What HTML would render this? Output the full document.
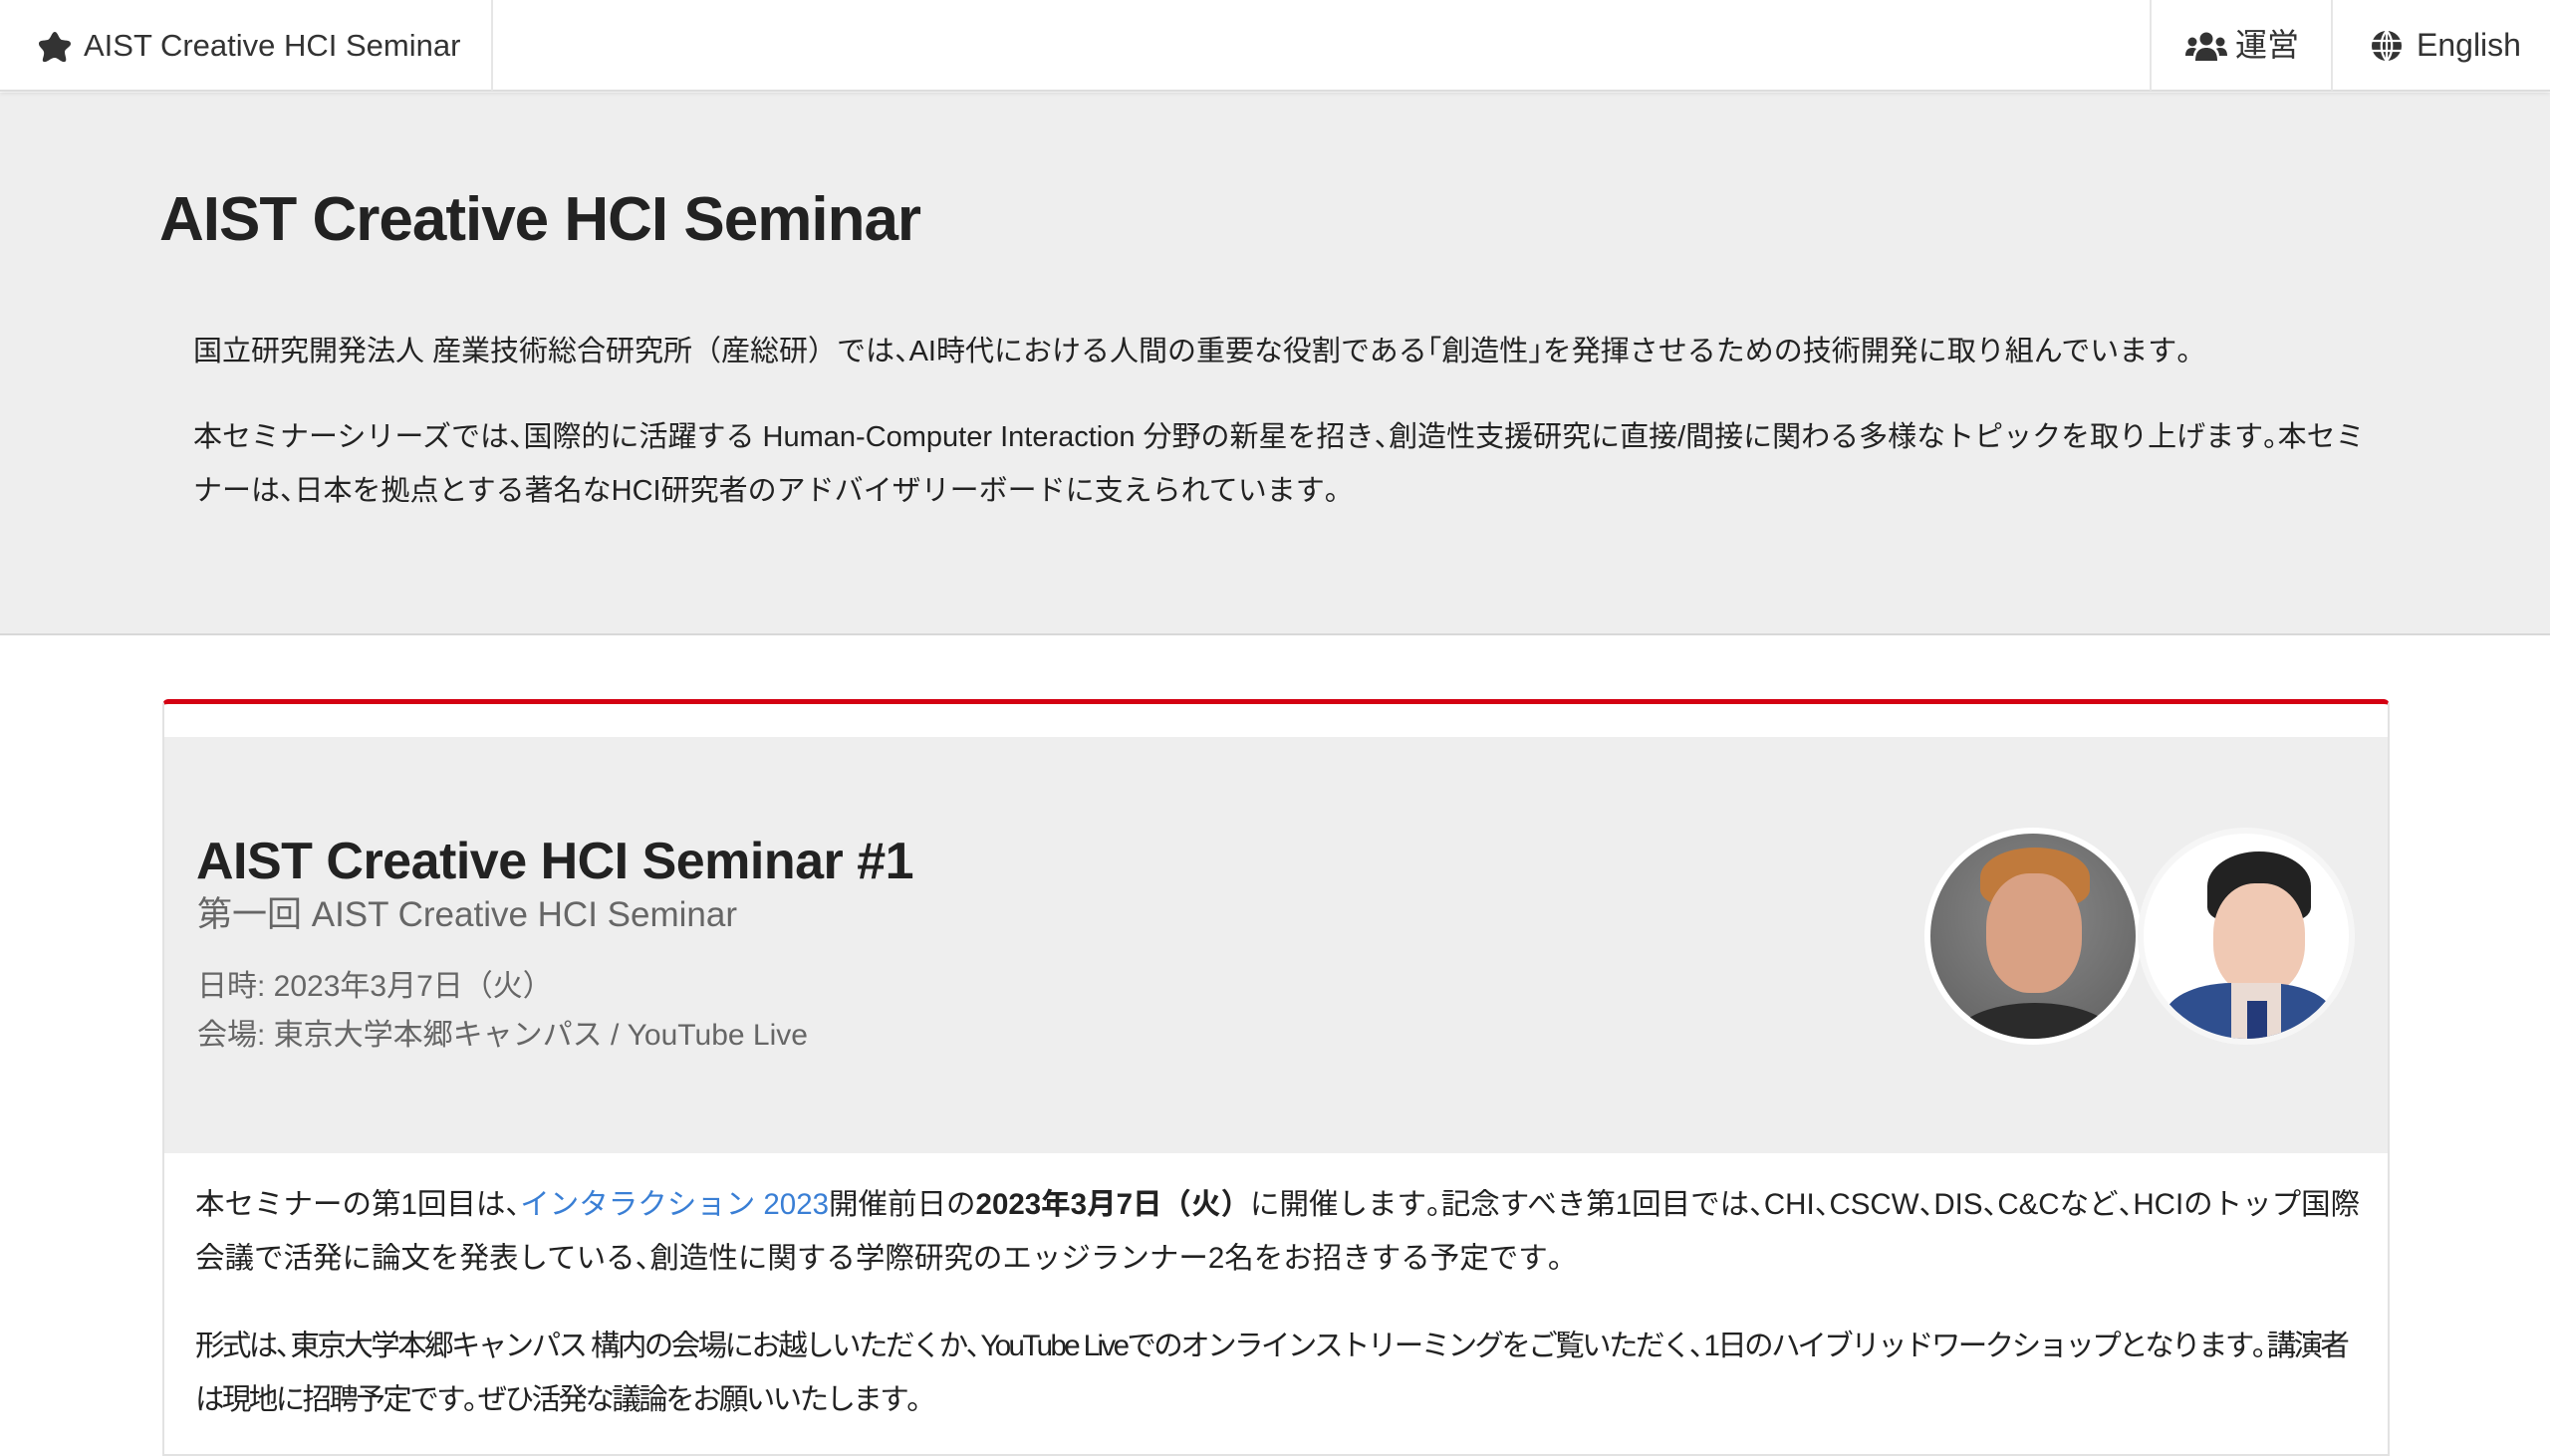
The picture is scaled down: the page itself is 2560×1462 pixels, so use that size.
<!DOCTYPE html>
<html><head><meta charset="utf-8">
<style>
*{margin:0;padding:0;box-sizing:border-box}
html,body{width:2560px;height:1440px;overflow:hidden;background:#fff;font-family:"Liberation Sans","Noto Sans CJK JP",sans-serif;color:#222}
.p{letter-spacing:-0.5em}
.q{margin-left:-0.5em}
.nav{position:absolute;left:0;top:0;width:2560px;height:92px;background:#fff;border-bottom:2px solid #ddd;box-shadow:0 2px 4px rgba(0,0,0,.08);z-index:2}
.brand{position:absolute;left:0;top:0;width:495px;height:91px;border-right:2px solid #e6e6e6;font-size:31px;line-height:91px;padding-left:84px;color:#333}
.brand svg{position:absolute;left:38px;top:31px}
.ni{position:absolute;top:0;height:91px;line-height:91px;font-size:32px;color:#333;border-left:2px solid #e6e6e6}
.hero{position:absolute;left:0;top:93px;width:2560px;height:545px;background:#eee;border-bottom:2px solid #d8d8d8}
h1{position:absolute;left:160px;top:92px;font-size:62px;font-weight:bold;color:#222;letter-spacing:-1px}
.hp{position:absolute;left:194px;width:2185px;font-size:29px;line-height:54px;color:#222}
.card{position:absolute;left:163px;top:702px;width:2236px;height:760px;border:2px solid #e2e2e2;border-top:5px solid #d40012;border-radius:6px 6px 0 0;background:#fff}
.ch{position:absolute;left:0;top:33px;width:2232px;height:418px;background:#eee}
.ct{position:absolute;left:32px;top:95px;font-size:52px;font-weight:bold;color:#222;letter-spacing:-0.5px}
.cs{position:absolute;left:33px;top:150px;font-size:35px;color:#666}
.cd{position:absolute;left:33px;top:226px;font-size:30px;line-height:49px;color:#666}
.av{position:absolute;top:831px;width:218px;height:218px;border-radius:50%;border:6px solid #fff;overflow:hidden}
.bp{position:absolute;left:196px;width:2175px;font-size:29.5px;line-height:54px;color:#222}
a{color:#3a7fd5;text-decoration:none}
</style></head><body>
<div class="nav">
 <div class="brand"><svg width="34" height="32" viewBox="0 0 34 32"><path d="M17 1 C20 1 21 8 24 9 C28 10 33 9 33 13 C33 16 27 18 27 21 C27 25 30 30 27 31 C24 32 20 27 17 27 C13 27 9 32 6 31 C3 30 7 25 6 21 C5 18 1 16 1 13 C1 9 6 10 10 9 C13 8 14 1 17 1Z" fill="#333"/></svg>AIST Creative HCI Seminar</div>
 <div class="ni" style="left:2158px;width:182px;padding-left:34px"><svg style="position:absolute;left:34px;top:32px" width="42" height="30" viewBox="0 0 42 30"><circle cx="21" cy="7" r="6.5" fill="#333"/><circle cx="7" cy="10" r="4.5" fill="#333"/><circle cx="35" cy="10" r="4.5" fill="#333"/><path d="M10 29 C10 20 14 16 21 16 C28 16 32 20 32 29Z" fill="#333"/><path d="M0 24 C0 18 3 16 7 16 C10 16 11 17 11 17 C9 19 8 22 8 24Z M42 24 C42 18 39 16 35 16 C32 16 31 17 31 17 C33 19 34 22 34 24Z" fill="#333"/></svg><span style="position:absolute;left:84px">運営</span></div>
 <div class="ni" style="left:2340px;width:220px"><svg style="position:absolute;left:38px;top:30px" width="32" height="32" viewBox="0 0 32 32"><circle cx="16" cy="16" r="15" fill="#333"/><path d="M1 11H31M1 21H31M16 1V31M16 1C9 8 9 24 16 31M16 1C23 8 23 24 16 31" stroke="#fff" stroke-width="2.2" fill="none"/></svg><span style="position:absolute;left:84px">English</span></div>
</div>
<div class="hero">
 <h1>AIST Creative HCI Seminar</h1>
 <div class="hp" style="top:233px">国立研究開発法人 産業技術総合研究所（産総研）では<span class="p">、</span>AI時代における人間の重要な役割である<span class="q">「</span>創造性<span class="p">」</span>を発揮させるための技術開発に取り組んでいます<span class="p">。</span></div>
 <div class="hp" style="top:319px">本セミナーシリーズでは<span class="p">、</span>国際的に活躍する Human-Computer Interaction 分野の新星を招き<span class="p">、</span>創造性支援研究に直接/間接に関わる多様なトピックを取り上げます<span class="p">。</span>本セミナーは<span class="p">、</span>日本を拠点とする著名なHCI研究者のアドバイザリーボードに支えられています<span class="p">。</span></div>
</div>
<div class="card">
 <div class="ch">
  <div class="ct">AIST Creative HCI Seminar #1</div>
  <div class="cs">第一回 AIST Creative HCI Seminar</div>
  <div class="cd">日時: 2023年3月7日（火）<br>会場: 東京大学本郷キャンパス / YouTube Live</div>
 </div>
</div>
<div class="av" style="left:1932px;background:radial-gradient(circle at 50% 40%,#8a8a8a,#5e5e5e)">
 <div style="position:absolute;left:50px;top:14px;width:110px;height:60px;border-radius:50% 50% 30% 30%;background:#c07a3c"></div>
 <div style="position:absolute;left:56px;top:40px;width:96px;height:120px;border-radius:45%;background:#d9a184"></div>
 <div style="position:absolute;left:20px;top:170px;width:170px;height:80px;border-radius:50% 50% 0 0;background:#2b2b2b"></div>
</div>
<div class="av" style="left:2146px;background:#fff;border-color:#f6f6f6">
 <div style="position:absolute;left:64px;top:18px;width:104px;height:70px;border-radius:50% 50% 20% 20%;background:#222"></div>
 <div style="position:absolute;left:70px;top:50px;width:92px;height:112px;border-radius:45%;background:#f0c9b4"></div>
 <div style="position:absolute;left:20px;top:150px;width:172px;height:90px;border-radius:40% 40% 0 0;background:#2f4f8f"></div>
 <div style="position:absolute;left:88px;top:150px;width:50px;height:60px;background:#eadbd3"></div>
 <div style="position:absolute;left:104px;top:168px;width:20px;height:50px;background:#243a7a"></div>
</div>
<div class="bp" style="top:1183px">本セミナーの第1回目は<span class="p">、</span><a>インタラクション 2023</a>開催前日の<b>2023年3月7日（火）</b>に開催します<span class="p">。</span>記念すべき第1回目では<span class="p">、</span>CHI<span class="p">、</span>CSCW<span class="p">、</span>DIS<span class="p">、</span>C&amp;Cなど<span class="p">、</span>HCIのトップ国際会議で活発に論文を発表している<span class="p">、</span>創造性に関する学際研究のエッジランナー2名をお招きする予定です<span class="p">。</span></div>
<div class="bp" style="top:1325px;letter-spacing:-2.6px">形式は<span class="p">、</span>東京大学本郷キャンパス 構内の会場にお越しいただくか<span class="p">、</span>YouTube Liveでのオンラインストリーミングをご覧いただく<span class="p">、</span>1日のハイブリッドワークショップとなります<span class="p">。</span>講演者は現地に招聘予定です<span class="p">。</span>ぜひ活発な議論をお願いいたします<span class="p">。</span></div>
</body></html>
